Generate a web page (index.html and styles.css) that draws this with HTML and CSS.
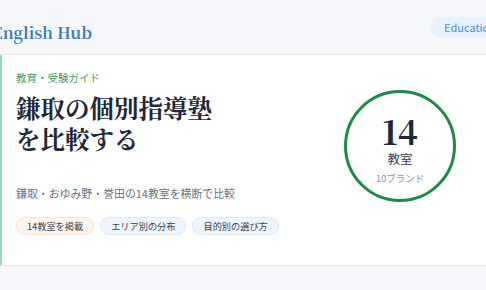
FILE: index.html
```html
<!DOCTYPE html>
<html lang="ja">
<head>
    <meta charset="UTF-8">
    <meta name="viewport" content="width=device-width, initial-scale=1.0">
    <title>鎌取の個別指導塾を比較する - English Hub</title>
    <link rel="stylesheet" href="styles.css">
</head>
<body>
    <header class="site-header">
        <a class="logo" href="#">English Hub</a>
        <span class="header-tag">Education</span>
    </header>

    <section class="hero">
        <div class="hero-text">
            <p class="eyebrow">教育・受験ガイド</p>
            <h1 class="hero-title">鎌取の個別指導塾<br>を比較する</h1>
            <p class="hero-lead">鎌取・おゆみ野・誉田の14教室を横断で比較</p>
            <ul class="chips">
                <li class="chip chip-warm">14教室を掲載</li>
                <li class="chip">エリア別の分布</li>
                <li class="chip">目的別の選び方</li>
            </ul>
        </div>
        <div class="stat-circle">
            <span class="stat-num">14</span>
            <span class="stat-unit">教室</span>
            <span class="stat-sub">10ブランド</span>
        </div>
    </section>
</body>
</html>
```

FILE: styles.css
```css
body {
    margin: 0;
    padding: 0;
    background-color: #f5f7fb;
    font-family: 'Noto Sans CJK JP', 'Noto Sans', sans-serif;
    color: #1f2937;
    overflow: hidden;
}
.site-header {
    display: flex;
    justify-content: space-between;
    align-items: center;
    height: 54px;
    border-bottom: 1px solid #e3e8ef;
}
.logo {
    margin: 10px 0 0 -8px;
    font-family: 'Noto Serif CJK JP', 'Liberation Serif', serif;
    font-weight: 700;
    font-size: 16px;
    color: #3b7fc0;
    text-decoration: none;
}
.header-tag {
    margin-right: -24px;
    padding: 2px 14px;
    border-radius: 10px;
    background-color: #e8f2fc;
    color: #4a8fcf;
    font-size: 11px;
    line-height: 16px;
}
.hero {
    display: flex;
    align-items: center;
    justify-content: space-between;
    background-color: #fff;
    border-left: 2px solid #9dd3b1;
    border-bottom: 1px solid #e3e8ef;
    padding: 14px 30px 30px 14px;
}
.eyebrow {
    margin: 0;
    font-size: 10.5px;
    line-height: 18px;
    color: #3a9a5f;
}
.hero-title {
    margin: 5px 0 0;
    font-family: 'Noto Serif CJK JP', 'Noto Sans CJK JP', serif;
    font-weight: 700;
    font-size: 24.5px;
    line-height: 31px;
    color: #1e2838;
}
.hero-lead {
    margin: 29px 0 0;
    font-size: 10.9px;
    line-height: 20px;
    color: #6b7280;
}
.chips {
    display: flex;
    gap: 6px;
    margin: 14px 0 0;
    padding: 0;
    list-style: none;
}
.chip {
    padding: 0 10px;
    border: 1px solid #dbe8f7;
    border-radius: 10px;
    background-color: #eef5fd;
    font-size: 9.2px;
    line-height: 16px;
    color: #374151;
}
.chip-warm {
    border-color: #f6e3d1;
    background-color: #fdf4ec;
}
.stat-circle {
    display: flex;
    flex-direction: column;
    align-items: center;
    justify-content: center;
    box-sizing: border-box;
    width: 112px;
    height: 112px;
    padding-top: 4px;
    border: 3px solid #1e8a45;
    border-radius: 50%;
    margin-top: -12px;
}
.stat-num {
    font-family: 'Noto Serif CJK JP', 'Liberation Serif', serif;
    font-weight: 700;
    font-size: 34px;
    line-height: 38px;
    color: #1e2838;
}
.stat-unit {
    font-size: 12.5px;
    line-height: 18px;
    color: #374151;
}
.stat-sub {
    margin-top: 4px;
    font-size: 9.5px;
    line-height: 12px;
    color: #8a94a6;
}
```
